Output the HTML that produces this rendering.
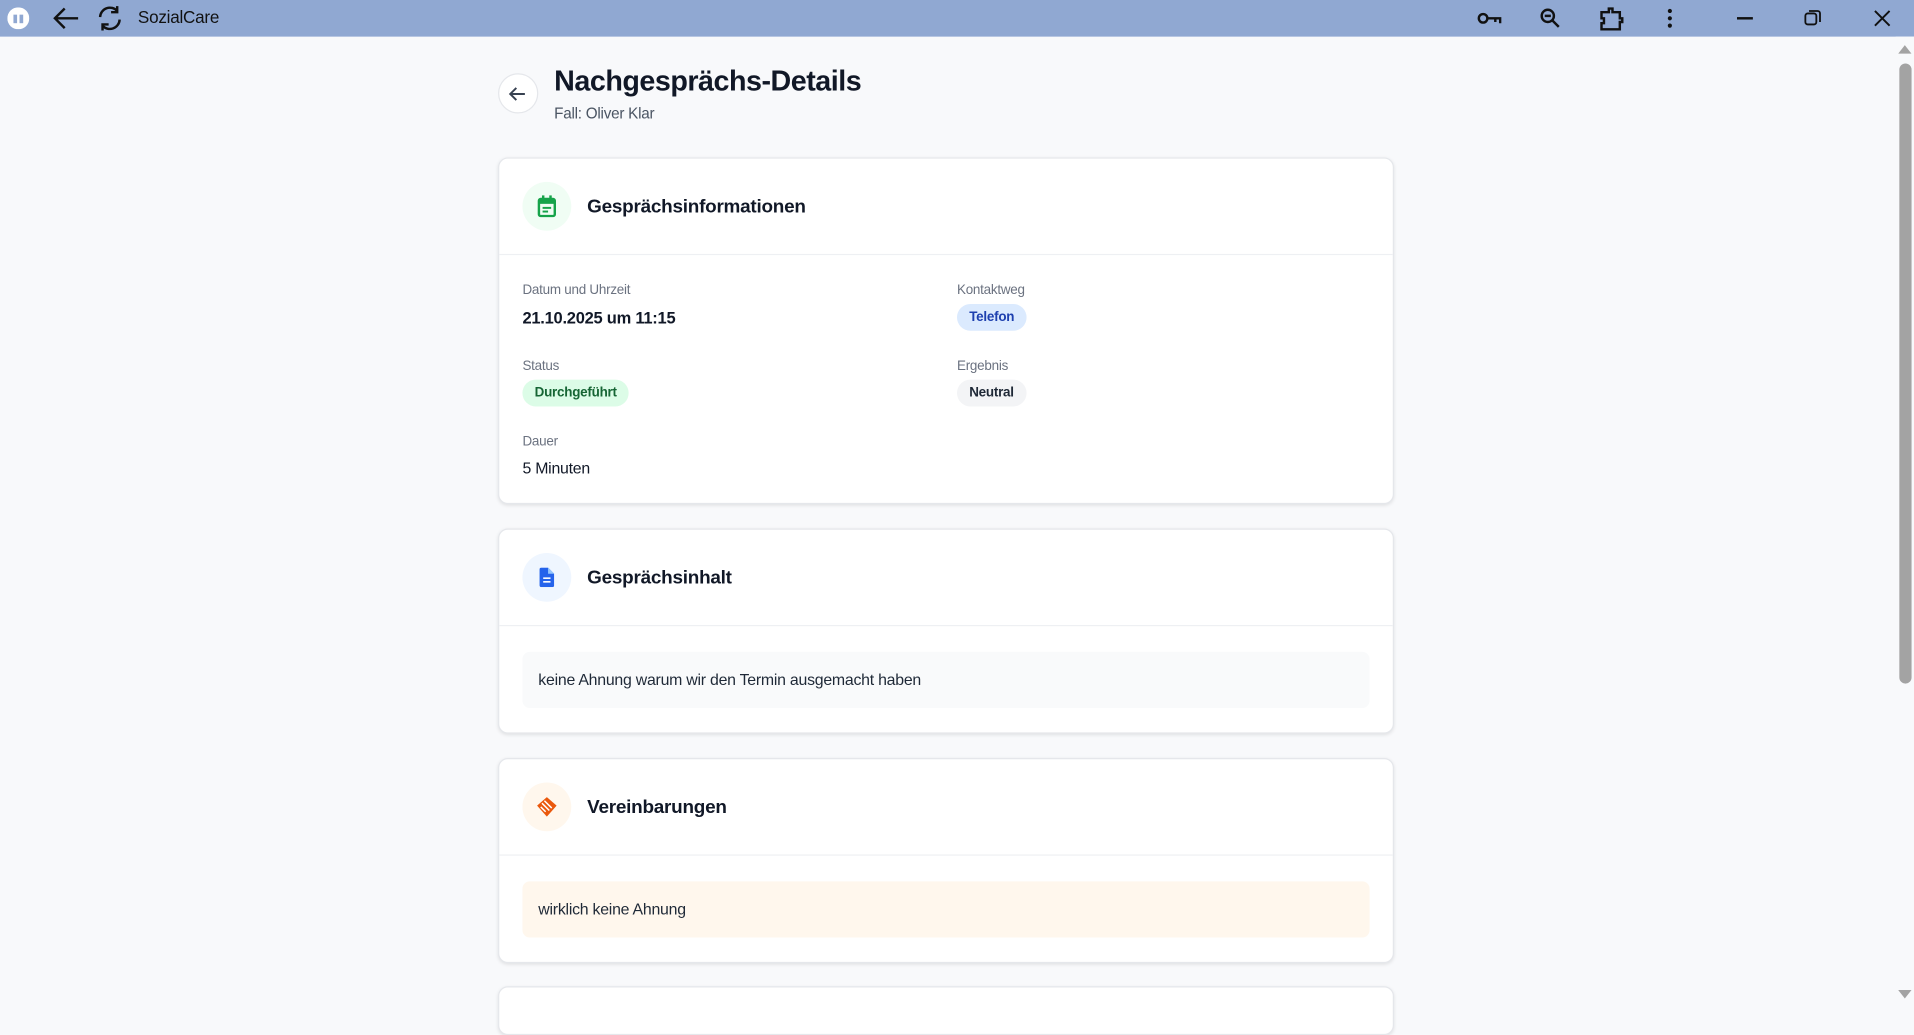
<!DOCTYPE html>
<html><head><meta charset="utf-8"><style>
*{box-sizing:border-box;margin:0;padding:0}
html,body{width:1914px;height:1003px;overflow:hidden;background:#f8f9fb;font-family:"Liberation Sans",sans-serif}
#w{position:absolute;left:0;top:0;width:1568px;height:822px;transform:scale(1.22066);transform-origin:0 0;letter-spacing:-0.2px}
.bar{position:absolute;left:0;top:0;width:1568px;height:30px;background:#90a8d2}
.abs{position:absolute}
.card{position:absolute;left:408px;width:734px;background:#fff;border:1px solid #e5e7eb;border-radius:8px;box-shadow:0 1px 3px rgba(0,0,0,.1)}
.hd{height:79px;border-bottom:1px solid #eef0f3;position:relative}
.ic{position:absolute;left:19px;top:19px;width:40px;height:40px;border-radius:50%;display:flex;align-items:center;justify-content:center}
.ht{position:absolute;left:72px;top:31px;font-size:15.5px;font-weight:bold;color:#111827}
.lbl{position:absolute;font-size:11px;color:#6b7280}
.pill{position:absolute;height:22px;border-radius:11px;font-size:11px;font-weight:bold;line-height:22px;padding:0 10px}
.box{position:absolute;left:19px;width:694px;height:46px;border-radius:6px;font-size:13px;color:#1f2937;line-height:46px;padding-left:13px}
</style></head><body><div id="w">
<div class="bar">
 <svg class="abs" style="left:6px;top:6px" width="18" height="18"><circle cx="9" cy="9" r="9" fill="#fff"/><rect x="5" y="6" width="3" height="7" fill="#90a8d2"/><rect x="10" y="6" width="3" height="7" fill="#90a8d2"/></svg>
 <svg class="abs" style="left:42px;top:4px" width="24" height="22" fill="none" stroke="#111" stroke-width="2"><path d="M22 11H3M11 3L3 11l8 8"/></svg>
 <svg class="abs" style="left:78px;top:3px" width="24" height="24" fill="none" stroke="#111" stroke-width="2"><path d="M4 11a8 8 0 0 1 14-5M20 13a8 8 0 0 1-14 5"/><path d="M18 2v5h-5M6 22v-5h5"/></svg>
 <div class="abs" style="left:113px;top:6px;font-size:14px;color:#111">SozialCare</div>
 <svg class="abs" style="left:1210px;top:8px" width="20" height="14" fill="none" stroke="#111" stroke-width="2"><circle cx="5" cy="7" r="3.5"/><path d="M9 7h10v4M15 7v3"/></svg>
 <svg class="abs" style="left:1261px;top:6px" width="18" height="18" fill="none" stroke="#111" stroke-width="2"><circle cx="7" cy="7" r="5"/><path d="M11 11l5 5M4.5 7h5"/></svg>
 <svg class="abs" style="left:1309px;top:4px" width="22" height="22" fill="none" stroke="#111" stroke-width="2"><path d="M3 6h6V3h3v3h6v5h2v3h-2v6H3v-5h2v-4H3z"/></svg>
 <svg class="abs" style="left:1365px;top:6px" width="6" height="18" fill="#111"><circle cx="3" cy="3" r="1.7"/><circle cx="3" cy="9" r="1.7"/><circle cx="3" cy="15" r="1.7"/></svg>
 <div class="abs" style="left:1423px;top:14px;width:13px;height:1.5px;background:#111"></div>
 <svg class="abs" style="left:1478px;top:7px" width="15" height="15" fill="none" stroke="#111" stroke-width="1.5"><rect x="1" y="4" width="9" height="9" rx="2"/><path d="M4 2h7a2 2 0 0 1 2 2v7"/></svg>
 <svg class="abs" style="left:1535px;top:8px" width="14" height="14" stroke="#111" stroke-width="1.6"><path d="M1 1l12 12M13 1L1 13"/></svg>
</div>
<div class="abs" style="left:1553px;top:30px;width:15px;height:792px;background:#f8f9fb"></div>
<svg class="abs" style="left:1555px;top:36px" width="11" height="8"><path d="M0 8L5.5 1 11 8z" fill="#a3a3a3"/></svg>
<div class="abs" style="left:1556px;top:52px;width:10px;height:508px;background:#a3a3a3;border-radius:5px"></div>
<svg class="abs" style="left:1555px;top:811px" width="11" height="8"><path d="M0 0L5.5 7 11 0z" fill="#a3a3a3"/></svg>

<div class="abs" style="left:408px;top:60px;width:33px;height:33px;border-radius:50%;border:1px solid #e5e7eb;background:#fff"></div>
<svg class="abs" style="left:416px;top:69px" width="16" height="16" fill="none" stroke="#374151" stroke-width="1.6"><path d="M14 8H2M7 3L2 8l5 5"/></svg>
<div class="abs" style="left:454px;top:53px;font-size:23.5px;font-weight:bold;color:#111827;letter-spacing:-0.4px">Nachgesprächs-Details</div>
<div class="abs" style="left:454px;top:86px;font-size:12.5px;color:#4b5563">Fall: Oliver Klar</div>

<div class="card" style="top:129px;height:284px">
 <div class="hd"><div class="ic" style="background:#f0fdf4"><svg width="16" height="18"><rect x="1.5" y="3" width="13" height="14" rx="1.5" fill="none" stroke="#16a34a" stroke-width="2"/><rect x="1.5" y="3" width="13" height="4" fill="#16a34a"/><rect x="4" y="0" width="2" height="4" fill="#16a34a"/><rect x="10" y="0" width="2" height="4" fill="#16a34a"/><rect x="4.5" y="9.5" width="7" height="1.6" fill="#16a34a"/><rect x="4.5" y="12.5" width="4.5" height="1.6" fill="#16a34a"/></svg></div><div class="ht">Gesprächsinformationen</div></div>
 <div class="lbl" style="left:19px;top:102px">Datum und Uhrzeit</div>
 <div class="abs" style="left:19px;top:123px;font-size:13.5px;font-weight:bold;color:#111827">21.10.2025 um 11:15</div>
 <div class="lbl" style="left:375px;top:102px">Kontaktweg</div>
 <div class="pill" style="left:375px;top:119px;background:#dbeafe;color:#1e40af">Telefon</div>
 <div class="lbl" style="left:19px;top:164px">Status</div>
 <div class="pill" style="left:19px;top:181px;background:#dcfce7;color:#166534">Durchgeführt</div>
 <div class="lbl" style="left:375px;top:164px">Ergebnis</div>
 <div class="pill" style="left:375px;top:181px;background:#f3f4f6;color:#1f2937">Neutral</div>
 <div class="lbl" style="left:19px;top:226px">Dauer</div>
 <div class="abs" style="left:19px;top:246px;font-size:13px;color:#111827">5 Minuten</div>
</div>

<div class="card" style="top:433px;height:168px">
 <div class="hd"><div class="ic" style="background:#eff6ff"><svg width="12" height="16"><path d="M0 1.5A1.5 1.5 0 0 1 1.5 0H7l5 5v9.5A1.5 1.5 0 0 1 10.5 16h-9A1.5 1.5 0 0 1 0 14.5z" fill="#2563eb"/><path d="M7 0v5h5" fill="#93c5fd"/><rect x="3" y="8" width="6" height="1.3" fill="#fff"/><rect x="3" y="11" width="6" height="1.3" fill="#fff"/></svg></div><div class="ht">Gesprächsinhalt</div></div>
 <div class="box" style="top:100px;background:#f9fafb">keine Ahnung warum wir den Termin ausgemacht haben</div>
</div>

<div class="card" style="top:621px;height:168px">
 <div class="hd"><div class="ic" style="background:#fff7ed"><svg width="18" height="18"><path d="M9 1L17 8 9 17 1 8z" fill="#ea580c"/><path d="M5 6l6 6M7 4l6 6M4 9l4 4" stroke="#fff" stroke-width="1.2"/></svg></div><div class="ht">Vereinbarungen</div></div>
 <div class="box" style="top:100px;background:#fff7ed">wirklich keine Ahnung</div>
</div>

<div class="card" style="top:808px;height:40px"></div>
</div></body></html>
